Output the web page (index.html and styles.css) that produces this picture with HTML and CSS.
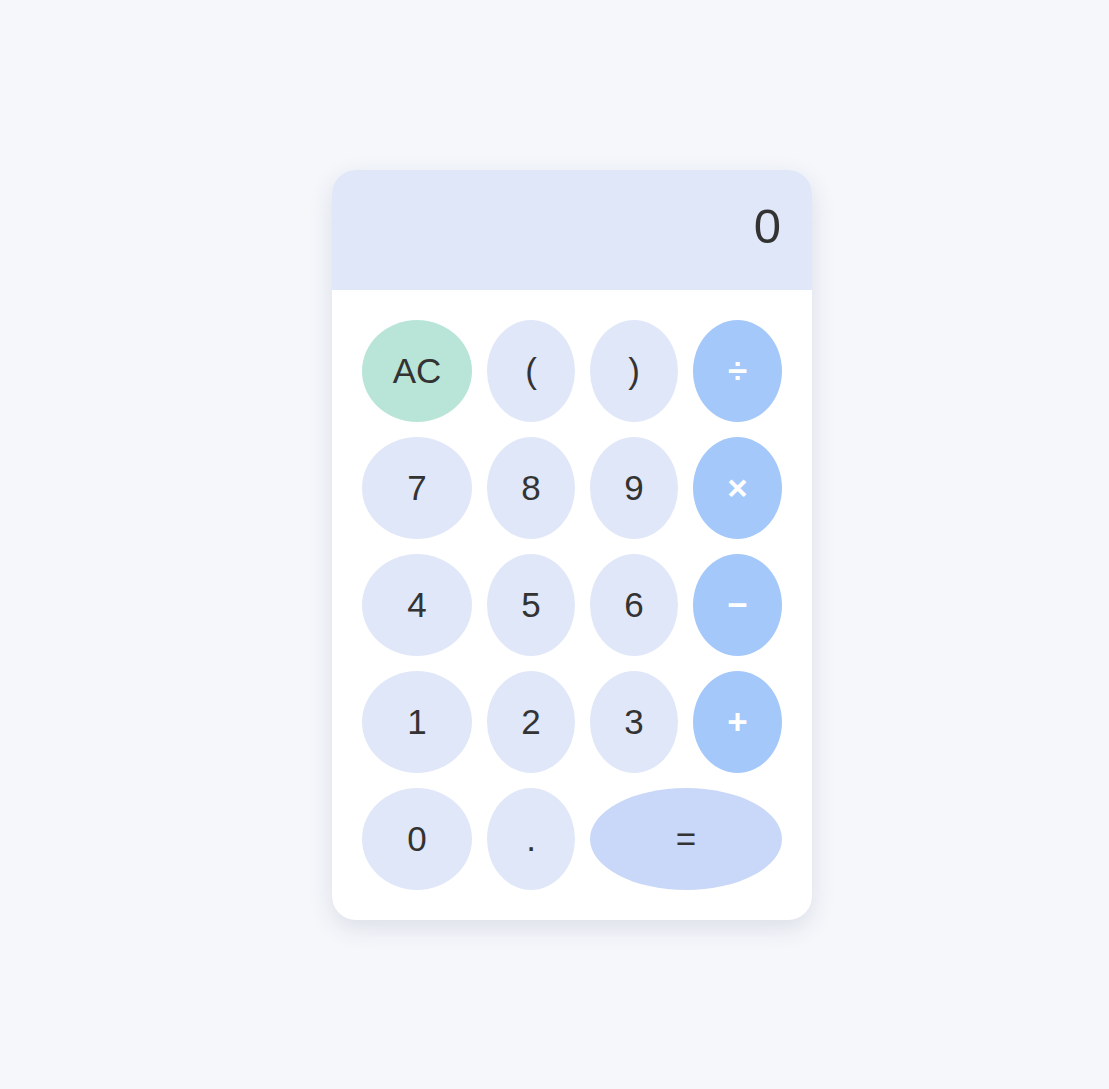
FILE: index.html
```html
<!DOCTYPE html>
<html>
<head>
<meta charset="utf-8">
<link rel="stylesheet" href="styles.css">
</head>
<body>
<div class="calc">
  <div class="display">0</div>
  <div class="keys">
    <button class="key clear">AC</button>
    <button class="key">(</button>
    <button class="key">)</button>
    <button class="key op">÷</button>
    <button class="key">7</button>
    <button class="key">8</button>
    <button class="key">9</button>
    <button class="key op">×</button>
    <button class="key">4</button>
    <button class="key">5</button>
    <button class="key">6</button>
    <button class="key op">−</button>
    <button class="key">1</button>
    <button class="key">2</button>
    <button class="key">3</button>
    <button class="key op">+</button>
    <button class="key">0</button>
    <button class="key">.</button>
    <button class="key equals">=</button>
  </div>
</div>
</body>
</html>
```
FILE: styles.css
```css
html, body {
  margin: 0;
  padding: 0;
}
body {
  background: #f5f7fb;
  font-family: "Liberation Sans", Arial, sans-serif;
  min-height: 1089px;
  display: flex;
  justify-content: center;
  align-items: center;
  padding-left: 35px;
  box-sizing: border-box;
}
.calc {
  width: 480px;
  background: #ffffff;
  border-radius: 24px;
  overflow: hidden;
  box-shadow: 0 8px 24px rgba(40, 50, 90, 0.12);
  margin-top: 1px;
}
.display {
  height: 120px;
  background: #e0e7f8;
  display: flex;
  align-items: center;
  justify-content: flex-end;
  padding: 0 31px 8px 30px;
  font-size: 49px;
  color: #333333;
  line-height: 1;
  box-sizing: border-box;
}
.keys {
  padding: 30px;
  display: grid;
  grid-template-columns: 110px 88px 88px 89px;
  grid-auto-rows: 102px;
  gap: 15px;
}
.key {
  -webkit-appearance: none;
  appearance: none;
  border: none;
  border-radius: 50%;
  background: #e0e7f8;
  color: #333333;
  font-family: "Liberation Sans", Arial, sans-serif;
  font-size: 35px;
  padding: 0;
  margin: 0;
  display: flex;
  align-items: center;
  justify-content: center;
}
.clear {
  background: #b8e5d7;
}
.op {
  background: #a4c8fa;
  color: #ffffff;
  font-weight: bold;
}
.equals {
  grid-column: span 2;
  background: #c9d8f8;
}
```
